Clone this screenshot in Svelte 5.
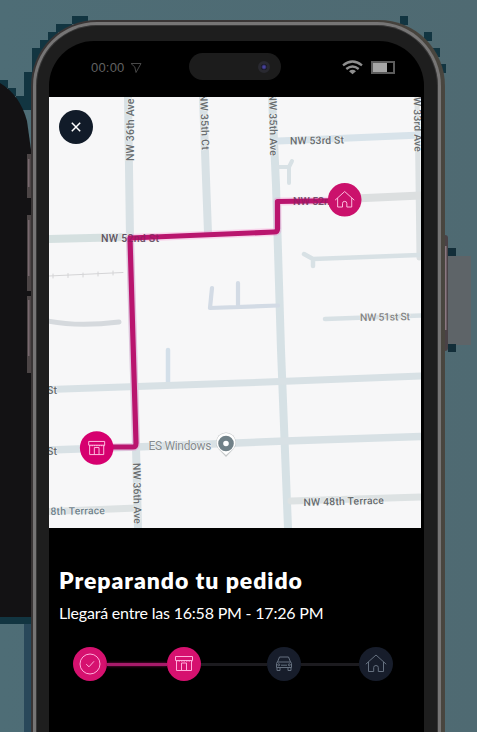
<script>
  const roads = [
    { d: 'M128 97L130 238L136 447L138 528', w: 8 },
    { d: 'M203 97L208 233', w: 8 },
    { d: 'M272 97L276 185L281 350L288 528', w: 8, c: '#d6e1e5' },
    { d: 'M417 97L419 258', w: 5, c: '#dce1e3' },
    { d: 'M278 141L421 135', w: 7, c: '#d8e3ea' },
    { d: 'M49 239L130 237', w: 8, c: '#d5e0e0' },
    { d: 'M344 199L421 195.500', w: 8, c: '#dcdfe0' },
    { d: 'M278 167H289V183M289 167L292 161', w: 4 },
    { d: 'M304 254L313 259L419 255M313 259V266', w: 4.5 },
    { d: 'M325 319L421 315.500', w: 4.5 },
    { d: 'M212 288L210 308L278 305.500M238 283V305', w: 4.200, c: '#d3dbe5' },
    { d: 'M168 350V384', w: 4.500, c: '#d3dfe9' },
    { d: 'M49 389.500L240 383L421 376', w: 7 },
    { d: 'M49 450L136 447L285 441L421 436.500', w: 7.500 },
    { d: 'M49 511.500L137 508M291 501L421 497', w: 7, c: '#dde2e3' },
    { d: 'M48 321Q78 327 119 322', w: 5, c: '#d5d9dd' }
  ];
  const steps = [
    { icon: 'check', done: true, gap: 0 },
    { icon: 'shop', done: true, gap: 60 },
    { icon: 'car', done: false, gap: 66 },
    { icon: 'home', done: false, gap: 58 }
  ];
</script>

{#snippet glyph(name)}
  {#if name === 'check'}
    <circle cx="17" cy="17" r="10" /><path d="M13.200 17.200L16 19.800L21 14.300" />
  {:else if name === 'shop'}
    <path d="M8.500 9.500H25.500V13.500H8.500ZM9.500 14V23.500H24.500V14M14.500 23.500V16H19.500V23.500" />
    <path stroke-dasharray="1.500 1" d="M9 14H25.500" />
  {:else if name === 'car'}
    <path d="M10.500 15L12.500 10H21.500L23.500 15M9.500 16.500Q9.500 15 11 15H23Q24.500 15 24.500 16.500V20.500H9.500ZM10 20.500V23.500H13V20.500M21 20.500V23.500H24V20.500M14 18.200H20" />
    <circle cx="11.700" cy="17.800" r="1" /><circle cx="22.300" cy="17.800" r="1" />
  {:else}
    <path d="M6.800 17.200L17 8L27.200 17.200M9.500 15V24.500H14.700V20.500Q14.700 18.500 17 18.500Q19.300 18.500 19.300 20.500V24.500H24.500V15" />
  {/if}
{/snippet}

<main>
  <svg class="backdrop" viewBox="0 0 477 732">
    <defs>
      <linearGradient id="haze" x1="0" x2="1" y1="0" y2="0">
        <stop offset="0" stop-color="#4e6d76" /><stop offset="1" stop-color="#4f6a72" />
      </linearGradient>
    </defs>
    <rect width="477" height="732" fill="url(#haze)" />
    <path fill="#123541" d="M72 16h16v8h-16zM56 24h16v8h-16zM48 32h10v12h-10zM40 40h8v12h-8zM32 48h10v24h-10zM24 72h10v36h-10zM0 80h8v8H0zM8 88h8v8H8zM16 96h16v14H16zM400 16h8v9h-8zM424 32h8v9h-8zM432 48h8v9h-8zM440 64h6v9h-6zM0 617h31v7H0z" />
    <path fill="#131214" d="M0 83Q20 95 27 121L31 150V617H0Z" />
    <path fill="#29485a" d="M24 624h8v108h-8z" />
    <path fill="#5e6468" d="M445 256h26v89h-26z" />
    <path fill="#132e39" d="M448 248h8v8h-8zM448 344h8v8h-8z" />
    <path fill="#4c4546" d="M27 154h5v44h-5zM27 215h5v76h-5zM27 296h5v77h-5z" />
    <path fill="#78696f" d="M28 159h1.500v28H28zM28 220h1.500v56H28zM28 300h1.500v56H28z" />
    <rect x="441" y="235" width="7" height="116" rx="3" fill="#4a4246" />
    <path fill="#8b7881" d="M445 246h1.500v84H445z" />
  </svg>

  <div class="phone">
    <div class="bezel">
      <div class="screen">
        <header>
          <div class="clock">
            <span>00:00</span>
            <svg width="12" height="12" viewBox="0 0 12 12"><path d="M1 1.500H11L6 10.500L4.800 5Z" fill="none" stroke="#484848" /></svg>
          </div>
          <div class="island"><i></i></div>
          <div class="signals">
            <svg width="21" height="15" viewBox="0 0 21 15" fill="none" stroke="#8e8e8e" stroke-width="2.300">
              <path d="M1 5.300Q10.500-2.300 20 5.300M4.300 9Q10.500 4 16.700 9" /><path d="M7 11.200Q10.500 8.500 14 11.200L10.500 14.200Z" fill="#8e8e8e" stroke="none" />
            </svg>
            <div class="battery"><b></b></div>
          </div>
        </header>

        <section class="map">
          <svg viewBox="49 97 372 431">
            <rect x="49" y="97" width="372" height="431" fill="#f7f7f8" />
            <g fill="none" stroke-linecap="round" stroke-linejoin="round">
              {#each roads as r}
                <path d={r.d} stroke={r.c ?? '#d8e1e5'} stroke-width={r.w} />
              {/each}
              <path d="M49 276L123 272.500M53 274v4M68 273.500v4M83 273v4M98 272v4M113 271v4" stroke="#d4d4d6" />
            </g>
            <g class="labels">
              <text transform="translate(133.500 161) rotate(-90)" textLength="62.500">NW 36th Ave</text>
              <text transform="translate(200 94) rotate(88)" textLength="56">NW 35th Ct</text>
              <text transform="translate(269 93.500) rotate(89)" textLength="62.500">NW 35th Ave</text>
              <text transform="translate(413.500 89.500) rotate(89)" textLength="62.500">NW 33rd Ave</text>
              <text transform="translate(133 463) rotate(89)" textLength="61">NW 36th Ave</text>
              <text transform="translate(290 144.500) rotate(-1)" textLength="54">NW 53rd St</text>
              <text x="101" y="242" textLength="58">NW 52nd St</text>
              <text x="293" y="204.500" textLength="55">NW 52nd St</text>
              <text transform="translate(360 321) rotate(-1)" textLength="50" fill="#858585">NW 51st St</text>
              <text x="47" y="394" textLength="10">St</text>
              <text x="47" y="454.500" textLength="10">St</text>
              <text class="blue" transform="translate(50.500 515) rotate(-1)" textLength="54.500">8th Terrace</text>
              <text transform="translate(303.500 506) rotate(-1.500)" textLength="80.500">NW 48th Terrace</text>
              <text class="place" x="148.500" y="450" textLength="63">ES Windows</text>
            </g>
            <path d="M226 457L218.500 449A10 10 0 1 1 233.500 449Z" fill="#aeb2b4" opacity=".7" />
            <path d="M226 455L218.500 448.500A9.600 9.600 0 1 1 233.500 448.500Z" fill="#fff" />
            <circle cx="226" cy="443.500" r="5.300" fill="none" stroke="#718188" stroke-width="5" />
            <g fill="none" stroke-linejoin="round">
              <path d="M97 447H133Q136 447 136 443L130 238L274 232Q277.500 232 277.500 229V201.500L344 200.500" stroke="#ff4db7" stroke-opacity=".2" stroke-width="8" />
              <path d="M97 447H133Q136 447 136 443L130 238L274 232Q277.500 232 277.500 229V201.500L344 200.500" stroke="#b9156e" stroke-width="5.200" />
            </g>
            <g class="labels faint">
              <text x="101" y="242" textLength="58">NW 52nd St</text>
              <text x="293" y="204.500" textLength="55">NW 52nd St</text>
            </g>
            <circle cx="344.700" cy="199.800" r="16.800" fill="#cb116c" />
            <circle cx="96.700" cy="448" r="16.800" fill="#d6006f" />
            <g class="pin" transform="translate(328.700 184) scale(.94)">{@render glyph('home')}</g>
            <g class="pin" transform="translate(80.700 432.500) scale(.94)">{@render glyph('shop')}</g>
          </svg>
          <button aria-label="Cerrar">
            <svg width="10" height="10" viewBox="0 0 10 10"><path d="M.8.8L9.200 9.200M9.200.8L.8 9.200" stroke="#fff" stroke-width="1.500" /></svg>
          </button>
        </section>

        <section class="status">
          <h1>Preparando tu pedido</h1>
          <p>Llegará entre las 16:58 PM - 17:26 PM</p>
          <div class="steps">
            {#each steps as s, i}
              {#if i > 0}<span class="bar" class:done={s.done} style:width="{s.gap}px"></span>{/if}
              <div class="step" class:done={s.done}>
                <svg width="34" height="34" viewBox="0 0 34 34">{@render glyph(s.icon)}</svg>
              </div>
            {/each}
          </div>
        </section>
      </div>
    </div>
  </div>
</main>

<style>
  :global(body) { overflow: hidden; background: #4f6b73; }
  main { position: relative; width: 477px; height: 732px; overflow: hidden; font-family: 'Liberation Sans', Arial, sans-serif; }
  .backdrop { position: absolute; inset: 0; width: 477px; height: 732px; }
  svg { display: block; }
  .phone {
    position: relative; box-sizing: border-box; width: 414px; height: 800px; margin: 20px 0 0 31px; padding: 2px 4px 0 2px;
    border-radius: 66px 66px 0 0; background: linear-gradient(90deg, #393535 0 50%, #49463f);
  }
  .bezel {
    box-sizing: border-box; height: 100%; border: 3px solid #767575; border-bottom: 0; border-radius: 64px 64px 0 0;
    padding: 16px 14px 0 13px; background: #1e1e1e; box-shadow: inset 0 0 0 1px #373737;
  }
  .screen { height: 100%; background: #000; border-radius: 45px 45px 0 0; }
  header { height: 56px; display: flex; align-items: flex-start; }
  .clock { display: flex; align-items: center; gap: 4px; width: 97px; margin: 20px 0 0 42px; color: #626262; font: 13px/14px 'Liberation Sans'; }
  .clock span { width: 35px; letter-spacing: .2px; white-space: nowrap; }
  .island { width: 92px; height: 27px; margin: 12px 0 0 1px; border-radius: 14px; background: #1c1c1c; display: flex; align-items: center; justify-content: flex-end; }
  .island i { width: 6px; height: 6px; margin-right: 11px; border: 3px solid #292930; border-radius: 50%; background: radial-gradient(#46419b 25%, #15151e 70%); }
  .signals { display: flex; align-items: center; gap: 8px; margin: 19px 0 0 61px; }
  .battery { box-sizing: border-box; width: 24px; height: 13px; padding: 1px; border: 2px solid #5c5c5c; }
  .battery b { display: block; width: 14px; height: 9px; margin: -1px; background: #a6a6a6; }
  .map { position: relative; width: 372px; height: 431px; overflow: hidden; }
  .map > svg { width: 372px; height: 431px; }
  .labels { font: 500 10.500px Roboto, sans-serif; fill: #686d70; }
  .labels text { paint-order: stroke; stroke: #f5f7f7; stroke-width: 1px; }
  .labels .blue { fill: #71838d; }
  .labels .place { font-size: 12px; font-weight: 400; fill: #858b8e; }
  .labels.faint text { fill: #55274a; stroke: none; opacity: .3; }
  .pin { fill: none; stroke: #ffc7e5; stroke-width: 1; }
  button { position: absolute; left: 10px; top: 13px; width: 34px; height: 34px; padding: 0; border: 0; border-radius: 50%; background: #111b29; display: grid; place-items: center; }
  .status { padding: 38px 0 0 10px; color: #fff; }
  h1 { margin: 0; font: 800 23px/28px Lato, sans-serif; letter-spacing: .95px; white-space: nowrap; }
  p { margin: 7px 0 0; font: 400 16px/24px Lato, sans-serif; letter-spacing: -.2px; white-space: nowrap; }
  .steps { display: flex; align-items: center; margin: 22px 0 0 14px; }
  .step { width: 34px; height: 34px; border-radius: 50%; background: #171d2b; }
  .step svg { fill: none; stroke: #667180; stroke-width: 1; }
  .step.done { background: #d6116f; }
  .step.done svg { stroke: #ffaddb; }
  .bar { height: 3px; background: #1c1b1f; }
  .bar.done { background: #a81b6a; box-shadow: 0 0 3px #850c4c; }
</style>
